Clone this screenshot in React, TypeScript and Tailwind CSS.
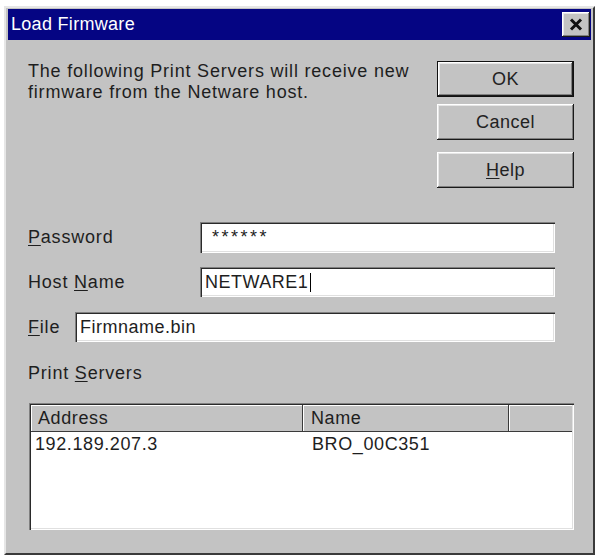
import React from 'react';

const raised =
  'shadow-[inset_-1px_-1px_#1a1a1a,inset_1px_1px_#ffffff,inset_-2px_-2px_#808080,inset_2px_2px_#e6e6e6]';
const sunken =
  'shadow-[inset_1px_1px_#808080,inset_2px_2px_#2a2a2a,inset_-1px_-1px_#ffffff,inset_-2px_-2px_#e0e0e0]';

const Btn = ({ children, isDefault }: { children: React.ReactNode; isDefault?: boolean }) => (
  <div className={isDefault ? 'h-[36px] border border-[#111]' : 'h-[36px]'}>
    <button className={`w-full h-full bg-[#c3c3c3] text-[18px] tracking-[0.5px] text-[#222] ${raised}`}>
      {children}
    </button>
  </div>
);

const Field = ({ children, className = '' }: { children: React.ReactNode; className?: string }) => (
  <div className={`flex-1 bg-white flex items-center pl-[5px] text-[18px] tracking-[0.5px] ${sunken} ${className}`}>
    {children}
  </div>
);

export default function App() {
  return (
    <div className="w-[598px] h-[557px] bg-white pt-[6px] pl-[4px] text-[#1e1e1e]" style={{ fontFamily: '"Liberation Sans", Arial, sans-serif' }}>
      <div className="w-[591px] h-[549px] bg-[#c3c3c3] p-[2px] pt-[1px] border-2 border-t-[#e6e6e6] border-l-[#e6e6e6] border-r-[#3a3a3a] border-b-[#3a3a3a]">
        {/* Title bar */}
        <div className="h-[31px] bg-[#050583] flex items-center justify-between pl-[3px] pr-[1px]">
          <span className="text-white text-[18px] tracking-[0.3px]">Load Firmware</span>
          <button className={`w-[28px] h-[25px] bg-[#c3c3c3] flex items-center justify-center ${raised}`}>
            <svg width="14" height="13" viewBox="0 0 14 13">
              <path d="M2 1.5 L12 11.5 M12 1.5 L2 11.5" stroke="#111" strokeWidth="3" />
            </svg>
          </button>
        </div>

        {/* Body */}
        <div className="pl-[20px] pr-[17px] pt-[21px]">
          <div className="flex">
            <p className="flex-1 text-[18px] leading-[21px] tracking-[0.8px]">
              The following Print Servers will receive new
              <br />
              firmware from the Netware host.
            </p>
            <div className="w-[137px] flex flex-col">
              <Btn isDefault>OK</Btn>
              <div className="mt-[7px]">
                <Btn>Cancel</Btn>
              </div>
              <div className="mt-[12px]">
                <Btn>
                  <u className="underline-offset-2">H</u>elp
                </Btn>
              </div>
            </div>
          </div>

          <div className="mr-[19px] text-[18px] tracking-[0.8px]">
            <div className="flex items-center mt-[34px] h-[31px]">
              <span className="w-[172px]">
                <u className="underline-offset-2">P</u>assword
              </span>
              <Field className="h-full pl-[12px] tracking-[2.5px] text-[15px]">******</Field>
            </div>
            <div className="flex items-center mt-[14px] h-[30px]">
              <span className="w-[172px]">
                Host <u className="underline-offset-2">N</u>ame
              </span>
              <Field className="h-full pl-[3px]">
                NETWARE1
                <span className="inline-block w-px h-[19px] bg-black ml-[2px]" />
              </Field>
            </div>
            <div className="flex items-center mt-[15px] h-[30px]">
              <span className="w-[47px]">
                <u className="underline-offset-2">F</u>ile
              </span>
              <Field className="h-full">Firmname.bin</Field>
            </div>
          </div>

          <div className="mt-[21px] text-[18px] leading-[21px] tracking-[0.8px]">
            Print <u className="underline-offset-2">S</u>ervers
          </div>

          {/* List */}
          <div className={`mt-[19px] ml-[1px] h-[127px] bg-white p-[2px] ${sunken}`}>
            <div className="flex h-[27px] text-[18px] tracking-[0.6px]">
              <div className="w-[272px] bg-[#c3c3c3] border-r border-b border-[#3a3a3a] shadow-[inset_1px_1px_#ffffff] flex items-center pl-[7px]">
                Address
              </div>
              <div className="w-[206px] bg-[#c3c3c3] border-r border-b border-[#3a3a3a] shadow-[inset_1px_1px_#ffffff] flex items-center pl-[8px]">
                Name
              </div>
              <div className="flex-1 bg-[#c3c3c3] border-b border-[#3a3a3a] shadow-[inset_1px_1px_#ffffff]" />
            </div>
            <div className="flex h-[24px] items-center text-[18px] tracking-[0.6px]">
              <div className="w-[272px] pl-[4px]">192.189.207.3</div>
              <div className="pl-[9px]">BRO_00C351</div>
            </div>
          </div>
        </div>
      </div>
    </div>
  );
}
